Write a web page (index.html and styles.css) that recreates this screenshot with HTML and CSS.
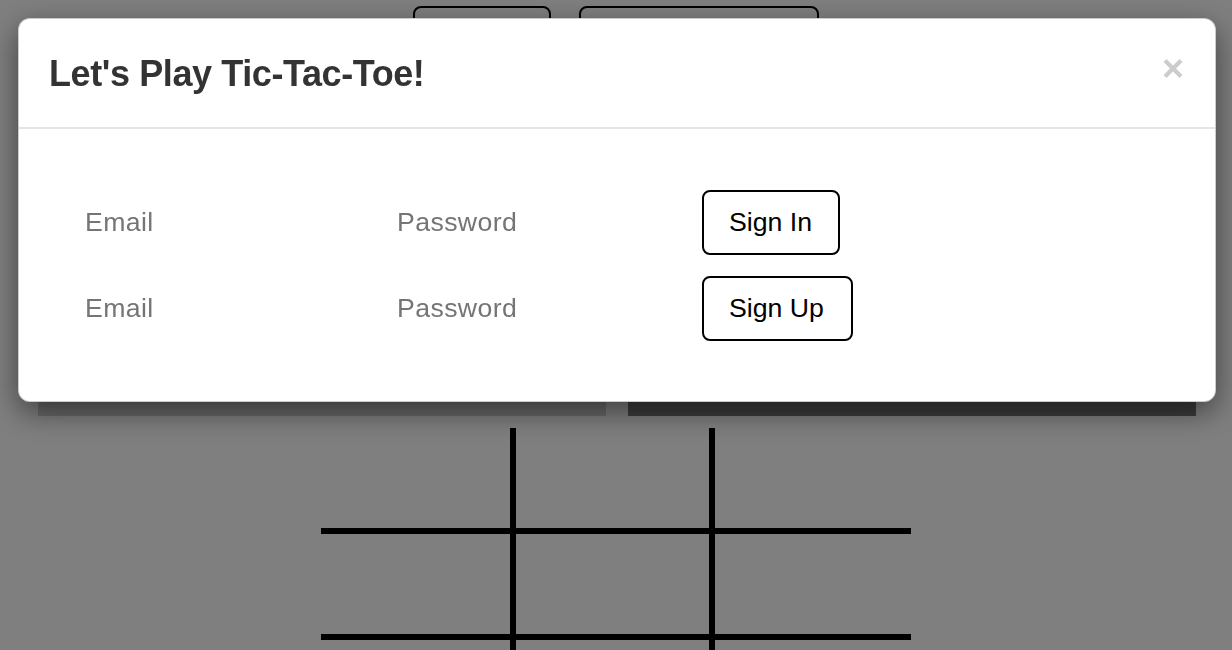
FILE: index.html
```html
<!DOCTYPE html>
<html lang="en">
<head>
<meta charset="utf-8">
<title>Tic-Tac-Toe</title>
<link rel="stylesheet" href="styles.css">
</head>
<body>
<div class="page">
  <div class="top-actions">
    <button class="page-btn btn-narrow">Reset</button>
    <button class="page-btn btn-wide">Sign Out</button>
  </div>
  <div class="panels">
    <div class="panel panel-light"></div>
    <div class="panel panel-dark"></div>
  </div>
  <div class="board">
    <div class="cell"></div><div class="cell"></div><div class="cell"></div>
    <div class="cell"></div><div class="cell"></div><div class="cell"></div>
    <div class="cell"></div><div class="cell"></div><div class="cell"></div>
  </div>
</div>

<div class="backdrop">
  <div class="modal">
    <div class="modal-header">
      <h4 class="modal-title">Let's Play Tic-Tac-Toe!</h4>
      <button class="close" aria-label="Close">
        <svg width="20" height="19" viewBox="0 0 20 19" aria-hidden="true">
          <path d="M2 1.5 L18 17.5 M18 1.5 L2 17.5" stroke="#cccccc" stroke-width="4.2" fill="none"/>
        </svg>
      </button>
    </div>
    <div class="modal-body">
      <form class="auth-row">
        <input class="field" type="email" placeholder="Email">
        <input class="field" type="password" placeholder="Password">
        <button class="auth-btn" type="button">Sign In</button>
      </form>
      <form class="auth-row">
        <input class="field" type="email" placeholder="Email">
        <input class="field" type="password" placeholder="Password">
        <button class="auth-btn auth-btn-up" type="button">Sign Up</button>
      </form>
    </div>
  </div>
</div>
</body>
</html>
```

FILE: styles.css
```css
* {
  box-sizing: border-box;
}

html, body {
  margin: 0;
  padding: 0;
  height: 100%;
  overflow: hidden;
}

body {
  background: #ffffff;
  font-family: "Liberation Sans", Arial, Helvetica, sans-serif;
  color: #333333;
}

.page {
  padding-top: 6px;
}

.top-actions {
  display: flex;
  justify-content: center;
  gap: 28px;
}

.page-btn {
  height: 65px;
  padding: 0;
  white-space: nowrap;
  background: #ffffff;
  border: 2px solid #000000;
  border-radius: 8px;
  font-family: "Liberation Sans", Arial, sans-serif;
  font-size: 26.67px;
  line-height: 31px;
  color: #000000;
}

.btn-narrow {
  width: 138px;
}

.btn-wide {
  width: 240px;
}

.panels {
  display: flex;
  gap: 22px;
  margin: 285px 36px 0 38px;
}

.panel {
  flex: 1;
  height: 60px;
}

.panel-light {
  background: #d4d4d4;
}

.panel-dark {
  background: #7a7a7a;
}

.board {
  width: 590px;
  margin: 12px auto 0;
  display: grid;
  grid-template-columns: 189px 193px 196px;
  grid-auto-rows: 100px;
  gap: 6px;
  background: #000000;
}

.cell {
  background: #ffffff;
}

.backdrop {
  position: fixed;
  inset: 0;
  background: rgba(0, 0, 0, 0.5);
  padding: 18px 16px 0 18px;
}

.modal {
  background: #ffffff;
  border: 1px solid rgba(0, 0, 0, 0.2);
  border-radius: 12px;
  box-shadow: 0 10px 30px rgba(0, 0, 0, 0.5);
}

.modal-header {
  display: flex;
  justify-content: space-between;
  align-items: flex-start;
  padding: 35px 30px 33px 30px;
  border-bottom: 2px solid #e5e5e5;
}

.modal-title {
  margin: 0;
  font-size: 36px;
  line-height: 40px;
  font-weight: 700;
  letter-spacing: -0.4px;
  color: #333333;
}

.close {
  margin: 5px 2px 0 0;
  padding: 0;
  border: 0;
  background: transparent;
  line-height: 0;
}

.modal-body {
  padding: 61px 30px 60px 66px;
  display: flex;
  flex-direction: column;
  gap: 21px;
}

.auth-row {
  margin: 0;
  display: grid;
  grid-template-columns: 312px 305px auto;
  align-items: baseline;
  justify-items: start;
}

.field {
  width: 100%;
  border: 0;
  padding: 0;
  margin: 0;
  outline: none;
  background: transparent;
  font-family: "Liberation Sans", Arial, sans-serif;
  font-size: 26.67px;
  line-height: 31px;
  letter-spacing: 0.4px;
  color: #333333;
}

.field::placeholder {
  color: #757575;
  opacity: 1;
}

.auth-btn {
  margin: 0;
  padding: 15px 26px 15px 25px;
  background: #ffffff;
  border: 2px solid #000000;
  border-radius: 8px;
  font-family: "Liberation Sans", Arial, sans-serif;
  font-size: 26.67px;
  line-height: 31px;
  color: #000000;
}

.auth-btn-up {
  padding-right: 27px;
}
```
